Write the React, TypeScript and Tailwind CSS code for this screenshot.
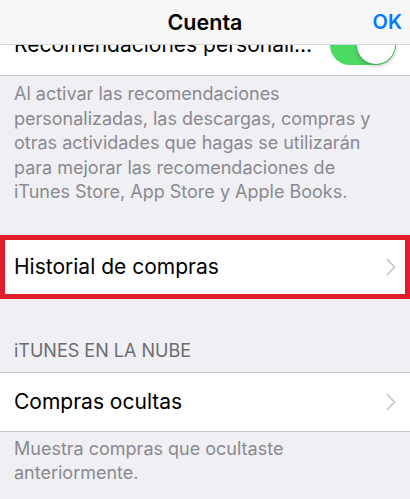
import React from 'react'

const font = { fontFamily: 'Inter, "Liberation Sans", Arial, sans-serif' }

function Chevron() {
  return (
    <svg width="10" height="18" viewBox="0 0 10 18" fill="none" className="shrink-0">
      <path d="M1.5 1.5 L8.5 9 L1.5 16.5" stroke="#c7c7cc" strokeWidth="1.8" strokeLinecap="round" strokeLinejoin="round" />
    </svg>
  )
}

function Toggle() {
  return (
    <div className="relative h-[40px] w-[66px] shrink-0 rounded-full bg-[#4cd964]">
      <div className="absolute right-[1px] top-[1px] h-[38px] w-[38px] rounded-full bg-white shadow-[0_2px_4px_rgba(0,0,0,0.25)]" />
    </div>
  )
}

function Footer({ children }: { children: React.ReactNode }) {
  return <p className="px-[14px] text-[18px] leading-[24.5px] text-[#8a8a8f]">{children}</p>
}

export default function App() {
  return (
    <div className="relative h-[499px] w-[410px] overflow-hidden bg-[#efeff4]" style={font}>
      {/* navigation bar sits over the scrolled list */}
      <div className="absolute inset-x-0 top-0 z-10 flex h-[45px] items-center justify-center border-b border-[#d6d6da] bg-[#f7f7f7]">
        <span className="text-[21.5px] font-semibold text-black">Cuenta</span>
        <span className="absolute right-[8px] text-[20px] font-semibold text-[#007aff]">OK</span>
      </div>

      <div className="pt-[14px]">
        <div className="flex h-[62px] items-center gap-3 border-b border-[#c8c7cc] bg-white pl-[14px] pr-[14px]">
          <span className="min-w-0 flex-1 truncate text-[21px] text-black">Recomendaciones personalizadas</span>
          <Toggle />
        </div>

        <div className="pt-[6px]">
          <Footer>
            Al activar las recomendaciones personalizadas, las descargas, compras y otras actividades que hagas se utilizarán para mejorar las recomendaciones de iTunes Store, App Store y Apple Books.
          </Footer>
        </div>

        <div className="mt-[30px] flex h-[64px] items-center border-[5px] border-[#e31c2b] bg-white pl-[9px] pr-[9px]">
          <span className="flex-1 text-[21px] text-black">Historial de compras</span>
          <Chevron />
        </div>

        <div className="px-[14px] pb-[9px] pt-[40px] text-[18px] leading-[24px] text-[#6d6d72]">iTUNES EN LA NUBE</div>

        <div className="flex h-[60px] items-center border-y border-[#c8c7cc] bg-white pl-[14px] pr-[14px]">
          <span className="flex-1 text-[21px] text-black">Compras ocultas</span>
          <Chevron />
        </div>

        <div className="pt-[5px]">
          <Footer>Muestra compras que ocultaste anteriormente.</Footer>
        </div>
      </div>
    </div>
  )
}
